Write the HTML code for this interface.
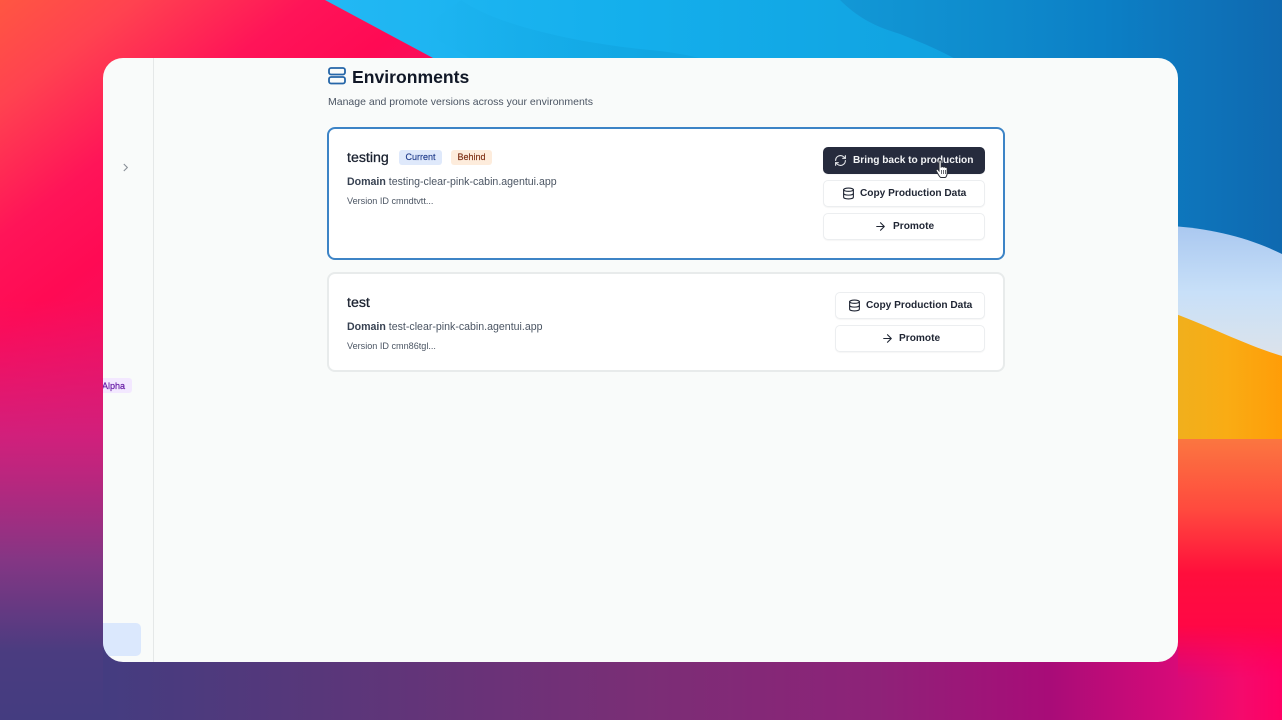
<!DOCTYPE html>
<html>
<head>
<meta charset="utf-8">
<title>Environments</title>
<style>
html,body{margin:0;padding:0;width:1282px;height:720px;overflow:hidden;background:#600;}
body{position:relative;font-family:"Liberation Sans",sans-serif;color:#111827;}
.bg{position:absolute;left:0;top:0;width:1282px;height:720px;}
.win{position:absolute;left:103px;top:58px;width:1075px;height:604px;background:#f9fbfa;border-radius:20px;overflow:hidden;}
.div{position:absolute;left:50px;top:0;width:1px;height:604px;background:#e5e8e8;}
.alpha{position:absolute;left:-6px;top:320px;width:35px;height:15px;border-radius:3px;background:#f3e8ff;}
.alphat{position:absolute;left:-1px;top:322px;font-size:9px;line-height:12px;color:#6b21a8;-webkit-text-stroke:.25px #6b21a8;}
.blue{position:absolute;left:-6px;top:565px;width:44px;height:33px;border-radius:5px;background:#dbe8fd;}
.t{position:absolute;white-space:nowrap;}
.card{position:absolute;box-sizing:border-box;background:#fff;border-radius:8px;}
.btn{position:absolute;box-sizing:border-box;background:#fff;border:1px solid #eceef0;border-radius:5px;box-shadow:0 1px 1px rgba(0,0,0,.04);}
.dark{background:#262b3d;border-color:#262b3d;}
.btxt{font-size:10.15px;line-height:14px;font-weight:bold;color:#1f2533;}
.badge{position:absolute;height:15px;border-radius:3px;font-size:9px;line-height:15px;text-align:center;-webkit-text-stroke:.15px currentColor;}
.dom{font-size:10.6px;line-height:14px;color:#4b5563;}
.dom b{color:#374151;}
.ver{font-size:9.1px;line-height:12px;color:#4b5563;}
svg.i{position:absolute;fill:none;}
</style>
</head>
<body>
<svg class="bg" viewBox="0 0 1282 720" preserveAspectRatio="none">
<defs>
<linearGradient id="red0" gradientUnits="userSpaceOnUse" x1="0" y1="0" x2="230" y2="300">
<stop offset="0" stop-color="#ff5642"/><stop offset=".22" stop-color="#ff4250"/><stop offset=".5" stop-color="#ff1458"/><stop offset=".7" stop-color="#ff0a54"/><stop offset="1" stop-color="#f01060"/>
</linearGradient>
<linearGradient id="purple" x1="0" y1="0" x2="0" y2="1">
<stop offset="0" stop-color="#e0187a" stop-opacity="0"/><stop offset=".32" stop-color="#cc2280" stop-opacity=".85"/><stop offset=".62" stop-color="#843684"/><stop offset=".84" stop-color="#4a3c80"/><stop offset="1" stop-color="#443c80"/>
</linearGradient>
<linearGradient id="sky" gradientUnits="userSpaceOnUse" x1="330" y1="0" x2="1000" y2="0">
<stop offset="0" stop-color="#22b8f4"/><stop offset=".45" stop-color="#14afec"/><stop offset="1" stop-color="#10a0de"/>
</linearGradient>
<linearGradient id="skyd" gradientUnits="userSpaceOnUse" x1="840" y1="0" x2="1282" y2="0">
<stop offset="0" stop-color="#1298d6"/><stop offset=".36" stop-color="#0e8acc"/><stop offset=".59" stop-color="#0c80c6"/><stop offset="1" stop-color="#0f69b0"/>
</linearGradient>
<linearGradient id="sky2" gradientUnits="userSpaceOnUse" x1="430" y1="0" x2="660" y2="0">
<stop offset="0" stop-color="#0f9ed9" stop-opacity="0"/><stop offset="1" stop-color="#0f9ed9" stop-opacity=".5"/>
</linearGradient>
<linearGradient id="pale" x1="0" y1="0" x2="0" y2="1">
<stop offset="0" stop-color="#aac8f0"/><stop offset=".5" stop-color="#c8e0f8"/><stop offset="1" stop-color="#dde3ea"/>
</linearGradient>
<linearGradient id="org" x1="0" y1="0" x2="1" y2="0">
<stop offset="0" stop-color="#efb01e"/><stop offset=".5" stop-color="#f9ac14"/><stop offset="1" stop-color="#ff9d08"/>
</linearGradient>
<linearGradient id="red" x1="0" y1="0" x2="0" y2="1">
<stop offset="0" stop-color="#fb7640"/><stop offset=".25" stop-color="#ff4a3e"/><stop offset=".48" stop-color="#ff0e3c"/><stop offset=".72" stop-color="#ff0648"/><stop offset=".9" stop-color="#ff0062"/><stop offset="1" stop-color="#ff0070"/>
</linearGradient>
<linearGradient id="bot" gradientUnits="userSpaceOnUse" x1="103" y1="0" x2="1178" y2="0">
<stop offset="0" stop-color="#443c80"/><stop offset=".2" stop-color="#58377a"/><stop offset=".5" stop-color="#7a2e76"/><stop offset=".72" stop-color="#8e2278"/><stop offset=".88" stop-color="#a80c78"/><stop offset="1" stop-color="#d80a78"/>
</linearGradient>
<linearGradient id="cornr" gradientUnits="userSpaceOnUse" x1="1178" y1="0" x2="1282" y2="0">
<stop offset="0" stop-color="#d80a78"/><stop offset=".6" stop-color="#f40a6c"/><stop offset="1" stop-color="#ff0064"/>
</linearGradient>
<linearGradient id="fadeV" gradientUnits="userSpaceOnUse" x1="0" y1="625" x2="0" y2="680">
<stop offset="0" stop-color="#000"/><stop offset="1" stop-color="#fff"/>
</linearGradient>
<mask id="cm" maskUnits="userSpaceOnUse" x="1178" y="600" width="104" height="120"><rect x="1178" y="600" width="104" height="120" fill="url(#fadeV)"/></mask>
</defs>
<rect width="1282" height="720" fill="url(#red0)"/>
<rect x="0" y="300" width="300" height="420" fill="url(#purple)"/>
<path d="M325 0L433 58L560 140H1282V0Z" fill="url(#sky)"/>
<path d="M461 0C500 28 590 44 640 49C675 52 700 57 720 64H480L420 30Z" fill="url(#sky2)"/>
<path d="M840 0C860 20 880 28 900 34C925 44 945 52 975 70L1000 300H1282V0Z" fill="url(#skyd)"/>
<path d="M1170 226C1210 228 1250 238 1282 254V360H1170Z" fill="url(#pale)"/>
<path d="M1170 312C1200 322 1245 345 1282 356V445H1170Z" fill="url(#org)"/>
<rect x="1170" y="439" width="112" height="281" fill="url(#red)"/>
<rect x="1178" y="600" width="104" height="120" fill="url(#cornr)" mask="url(#cm)"/>
<rect x="103" y="640" width="1075" height="80" fill="url(#bot)"/>
</svg>

<div class="win">
<div class="div"></div>
<svg class="i" style="left:18px;top:104px" width="9" height="11" viewBox="0 0 9 11"><path d="M2.8 2L6.300 5.500L2.800 9" stroke="#8a9098" stroke-width="1.100"/></svg>
<div class="alpha"></div>
<div class="t alphat">Alpha</div>
<div class="blue"></div>
</div>

<svg class="i" style="left:328px;top:67px" width="18" height="18" viewBox="0 0 18 18"><rect x="1" y="1" width="16" height="6.500" rx="2" stroke="#2566a8" stroke-width="1.800"/><rect x="1" y="10" width="16" height="6.500" rx="2" stroke="#2566a8" stroke-width="1.800"/></svg>
<div class="t" style="left:352px;top:66px;font-size:17.6px;line-height:22px;font-weight:bold;color:#111827">Environments</div>
<div class="t" style="left:328px;top:95px;font-size:10.5px;line-height:14px;color:#4b5563">Manage and promote versions across your environments</div>

<div class="card" style="left:327px;top:127px;width:678px;height:133px;border:2px solid #3d84c6"></div>
<div class="t" style="left:347px;top:149px;font-size:14.2px;line-height:18px;color:#1b2230;-webkit-text-stroke:.3px #1b2230">testing</div>
<div class="badge" style="left:399px;top:150px;width:43px;background:#dfe9fb;color:#1e3a8a">Current</div>
<div class="badge" style="left:451px;top:150px;width:41px;background:#fdecdc;color:#7c2d12">Behind</div>
<div class="t dom" style="left:347px;top:175px"><b>Domain</b> testing-clear-pink-cabin.agentui.app</div>
<div class="t ver" style="left:347px;top:195px">Version ID cmndtvtt...</div>

<div class="btn dark" style="left:823px;top:147px;width:162px;height:27px"></div>
<svg class="i" style="left:834px;top:154px" width="13" height="13" viewBox="0 0 24 24" stroke="#e5e7eb" stroke-width="2" stroke-linecap="round" stroke-linejoin="round"><path d="M3 12a9 9 0 0 1 15-6.700L21 8"/><path d="M21 3v5h-5"/><path d="M21 12a9 9 0 0 1-15 6.700L3 16"/><path d="M8 16H3v5"/></svg>
<div class="t btxt" style="left:853px;top:154px;color:#f3f4f6">Bring back to production</div>

<div class="btn" style="left:823px;top:180px;width:162px;height:27px"></div>
<svg class="i" style="left:842px;top:187px" width="13" height="13" viewBox="0 0 24 24" stroke="#1f2533" stroke-width="2" stroke-linecap="round" stroke-linejoin="round"><ellipse cx="12" cy="5" rx="9" ry="3"/><path d="M3 5v14c0 1.700 4 3 9 3s9-1.300 9-3V5"/><path d="M3 12c0 1.700 4 3 9 3s9-1.300 9-3"/></svg>
<div class="t btxt" style="left:860px;top:187px">Copy Production Data</div>

<div class="btn" style="left:823px;top:213px;width:162px;height:27px"></div>
<svg class="i" style="left:874px;top:220px" width="13" height="13" viewBox="0 0 24 24" stroke="#1f2533" stroke-width="2" stroke-linecap="round" stroke-linejoin="round"><path d="M5 12h14M12 5l7 7-7 7"/></svg>
<div class="t btxt" style="left:893px;top:220px">Promote</div>

<svg class="i" style="left:935px;top:159px" width="15" height="20" viewBox="0 0 15 20"><path d="M4 2.200c0-1.500 2.200-1.500 2.200 0V8l.3-.2c.6-.4 1.600-.3 2 .3.600-.4 1.500-.3 1.900.3.700-.3 1.600 0 1.800.8V14c0 2-1.200 4.500-2 4.500H6C5 18.500 4.300 17 3.300 15.500L1.300 12c-.7-1.300.9-2.300 1.900-1.200L4 11.800Z" fill="#fff" stroke="#2a2d36" stroke-width="1"/><path d="M6.500 11v4M8.500 11v4M10.500 11v4" stroke="#2a2d36" stroke-width=".7"/></svg>

<div class="card" style="left:327px;top:272px;width:678px;height:100px;border:2px solid #e8ebeb"></div>
<div class="t" style="left:347px;top:294px;font-size:14.2px;line-height:18px;color:#1b2230;-webkit-text-stroke:.3px #1b2230">test</div>
<div class="t dom" style="left:347px;top:320px"><b>Domain</b> test-clear-pink-cabin.agentui.app</div>
<div class="t ver" style="left:347px;top:340px">Version ID cmn86tgl...</div>

<div class="btn" style="left:835px;top:292px;width:150px;height:27px"></div>
<svg class="i" style="left:848px;top:299px" width="13" height="13" viewBox="0 0 24 24" stroke="#1f2533" stroke-width="2" stroke-linecap="round" stroke-linejoin="round"><ellipse cx="12" cy="5" rx="9" ry="3"/><path d="M3 5v14c0 1.700 4 3 9 3s9-1.300 9-3V5"/><path d="M3 12c0 1.700 4 3 9 3s9-1.300 9-3"/></svg>
<div class="t btxt" style="left:866px;top:299px">Copy Production Data</div>

<div class="btn" style="left:835px;top:325px;width:150px;height:27px"></div>
<svg class="i" style="left:881px;top:332px" width="13" height="13" viewBox="0 0 24 24" stroke="#1f2533" stroke-width="2" stroke-linecap="round" stroke-linejoin="round"><path d="M5 12h14M12 5l7 7-7 7"/></svg>
<div class="t btxt" style="left:899px;top:332px">Promote</div>
</body>
</html>
